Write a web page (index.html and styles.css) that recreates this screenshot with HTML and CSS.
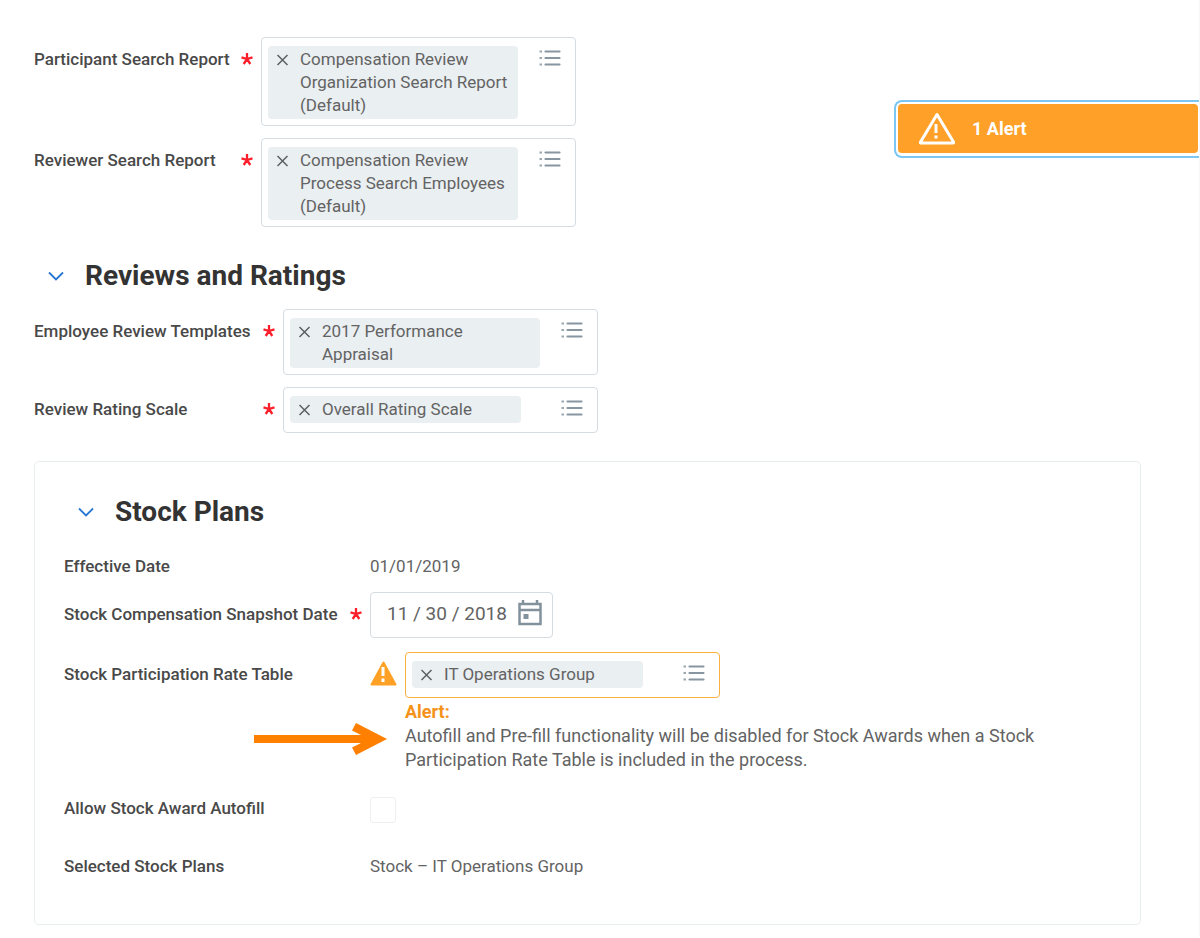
FILE: index.html
```html
<!DOCTYPE html>
<html lang="en">
<head>
    <meta charset="UTF-8">
    <meta name="viewport" content="width=device-width, initial-scale=1.0">
    <title>Compensation Review</title>
    <link rel="stylesheet" href="styles.css">
</head>
<body>
    <!-- shared icons -->
    <svg class="sprite" aria-hidden="true">
        <symbol id="icon-x" viewBox="0 0 12 12">
            <path d="M0.500 1l10 10M10.500 1L0.500 11" fill="none" stroke="#5a5e61" stroke-width="1.5"/>
        </symbol>
        <symbol id="icon-list" viewBox="0 0 22 18">
            <path d="M0.500 1.500h2.500M0.500 8h2.500M0.500 14.500h2.500" stroke="#9aa7af" stroke-width="2.200"/>
            <path d="M6.500 1.500h14M6.500 8h14M6.500 14.500h14" stroke="#8796a0" stroke-width="2.200" stroke-linecap="round"/>
        </symbol>
        <symbol id="icon-chevron" viewBox="0 0 16 10">
            <path d="M1 1.500l7 7 7-7" fill="none" stroke="#2676d2" stroke-width="1.800"/>
        </symbol>
        <symbol id="icon-star" viewBox="0 0 12 12">
            <path d="M6 6V0M6 6L0.500 4.300M6 6L11.500 4.300M6 6L2.700 11M6 6L9.300 11" fill="none" stroke="#fb1f2b" stroke-width="2.300"/>
        </symbol>
    </svg>

    <main class="page">
        <div class="top">
            <div class="fields fields-search">
                <div class="row">
                    <div class="name">
                        <label for="participant">Participant Search Report</label>
                        <svg class="star"><use href="#icon-star"/></svg>
                    </div>
                    <div class="prompt">
                        <div class="pill">
                            <button type="button" class="remove" aria-label="Remove"><svg><use href="#icon-x"/></svg></button>
                            <span>Compensation Review Organization Search Report (Default)</span>
                        </div>
                        <button type="button" class="list" id="participant"><svg><use href="#icon-list"/></svg></button>
                    </div>
                </div>
                <div class="row">
                    <div class="name">
                        <label for="reviewer">Reviewer Search Report</label>
                        <svg class="star"><use href="#icon-star"/></svg>
                    </div>
                    <div class="prompt">
                        <div class="pill">
                            <button type="button" class="remove" aria-label="Remove"><svg><use href="#icon-x"/></svg></button>
                            <span>Compensation Review Process Search Employees (Default)</span>
                        </div>
                        <button type="button" class="list" id="reviewer"><svg><use href="#icon-list"/></svg></button>
                    </div>
                </div>
            </div>

            <div class="alert-frame">
                <button type="button" class="alert-bar">
                    <svg viewBox="0 0 38 34">
                        <path d="M19 2.500L35.500 30Q36 31 35 31H3Q2 31 2.500 30Z" fill="none" stroke="#fff" stroke-width="3" stroke-linejoin="round"/>
                        <path d="M18 12v9M18 23.500v3" stroke="#fff" stroke-width="3"/>
                    </svg>
                    <span>1 Alert</span>
                </button>
            </div>
        </div>

        <section class="ratings">
            <h2><button type="button" class="toggle" aria-label="Collapse"><svg><use href="#icon-chevron"/></svg></button>Reviews and Ratings</h2>
            <div class="fields fields-ratings">
                <div class="row">
                    <div class="name">
                        <label for="templates">Employee Review Templates</label>
                        <svg class="star"><use href="#icon-star"/></svg>
                    </div>
                    <div class="prompt">
                        <div class="pill">
                            <button type="button" class="remove" aria-label="Remove"><svg><use href="#icon-x"/></svg></button>
                            <span>2017 Performance Appraisal</span>
                        </div>
                        <button type="button" class="list" id="templates"><svg><use href="#icon-list"/></svg></button>
                    </div>
                </div>
                <div class="row">
                    <div class="name">
                        <label for="scale">Review Rating Scale</label>
                        <svg class="star"><use href="#icon-star"/></svg>
                    </div>
                    <div class="prompt">
                        <div class="pill pill-short">
                            <button type="button" class="remove" aria-label="Remove"><svg><use href="#icon-x"/></svg></button>
                            <span>Overall Rating Scale</span>
                        </div>
                        <button type="button" class="list" id="scale"><svg><use href="#icon-list"/></svg></button>
                    </div>
                </div>
            </div>
        </section>

        <section class="panel">
            <h2><button type="button" class="toggle" aria-label="Collapse"><svg><use href="#icon-chevron"/></svg></button>Stock Plans</h2>
            <div class="fields fields-stock">
                <div class="row">
                    <div class="name"><span>Effective Date</span></div>
                    <div class="value">01/01/2019</div>
                </div>
                <div class="row">
                    <div class="name">
                        <label for="snapshot">Stock Compensation Snapshot Date</label>
                        <svg class="star"><use href="#icon-star"/></svg>
                    </div>
                    <div class="date-box">
                        <input type="text" id="snapshot" value="11 / 30 / 2018">
                        <button type="button" class="calendar" aria-label="Calendar">
                            <svg viewBox="0 0 24 26">
                                <path d="M1.500 4h21v20h-21z" fill="none" stroke="#82929c" stroke-width="2.500"/>
                                <path d="M1 10h22M5 0v4M19 0v4" stroke="#82929c" stroke-width="2.500"/>
                                <path d="M5.500 14h5v5h-5z" fill="#82929c"/>
                            </svg>
                        </button>
                    </div>
                </div>
                <div class="row row-alert">
                    <div class="name"><label for="rate-table">Stock Participation Rate Table</label></div>
                    <div class="warned">
                        <svg class="warning" viewBox="0 0 27 25">
                            <path d="M13.500 1.500L25.500 23.500H1.500Z" fill="#ffa126" stroke="#ffa126" stroke-width="2" stroke-linejoin="round"/>
                            <path d="M13 6v9M13 17.500v3.500" stroke="#fff" stroke-width="3"/>
                        </svg>
                        <div class="warned-body">
                            <div class="prompt prompt-warning">
                                <div class="pill pill-short">
                                    <button type="button" class="remove" aria-label="Remove"><svg><use href="#icon-x"/></svg></button>
                                    <span>IT Operations Group</span>
                                </div>
                                <button type="button" class="list" id="rate-table"><svg><use href="#icon-list"/></svg></button>
                            </div>
                            <p class="message"><strong>Alert:</strong>Autofill and Pre-fill functionality will be disabled for Stock Awards when a Stock Participation Rate Table is included in the process.</p>
                        </div>
                    </div>
                    <svg class="arrow" viewBox="0 0 134 32">
                        <path d="M0 12h107l-9-4.500 4-7.500 31 16-31 16-4-7.500 9-4.500H0z" fill="#ff8000"/>
                    </svg>
                </div>
                <div class="row row-check">
                    <div class="name"><label for="autofill">Allow Stock Award Autofill</label></div>
                    <input type="checkbox" id="autofill">
                </div>
                <div class="row">
                    <div class="name"><span>Selected Stock Plans</span></div>
                    <div class="value">Stock – IT Operations Group</div>
                </div>
            </div>
        </section>
    </main>
</body>
</html>
```
FILE: styles.css
```css
* {
    box-sizing: border-box;
}
body {
    margin: 0;
    background: #fff;
    color: #636363;
    font-family: Roboto, "Liberation Sans", sans-serif;
    font-size: 17px;
    line-height: 23px;
}
button {
    padding: 0;
    border: 0;
    background: none;
    font: inherit;
    cursor: pointer;
}
svg {
    display: block;
    flex: none;
}
.sprite {
    position: absolute;
    width: 0;
    height: 0;
}
.page {
    padding: 37px 0 12px 34px;
    border-right: 1px solid #f7f7f7;
}

/* alert banner */
.top {
    display: flex;
    justify-content: space-between;
}
.alert-frame {
    width: 305px;
    height: 58px;
    margin-top: 63px;
    padding: 2px 1px 3px 2px;
    border: 2px solid #7cc6f2;
    border-right: 0;
    border-radius: 8px 0 0 8px;
}
.alert-bar {
    display: flex;
    align-items: center;
    gap: 16px;
    width: 100%;
    height: 100%;
    padding-left: 20px;
    border-radius: 4px;
    background: #ffa028;
    color: #fff;
    font-size: 18px;
    font-weight: 700;
}
.alert-bar svg {
    width: 38px;
    height: 34px;
}

/* field rows */
.fields {
    display: flex;
    flex-direction: column;
    gap: 12px;
}
.row {
    display: flex;
    align-items: flex-start;
}
.name {
    display: flex;
    flex: none;
    justify-content: space-between;
    padding: 11px 8px 0 0;
    color: #494949;
    font-weight: 500;
}
.fields-search .name {
    width: 227px;
}
.fields-ratings .name {
    width: 249px;
}
.fields-stock .name {
    width: 306px;
}
.star {
    width: 12px;
    height: 12px;
    margin-top: 5px;
}
.value {
    padding-top: 11px;
}

.prompt {
    display: flex;
    align-items: flex-start;
    justify-content: space-between;
    width: 315px;
    min-height: 46px;
    padding: 8px 14px 6px 6px;
    border: 1px solid #d5dde2;
    border-radius: 4px;
}
.prompt-warning {
    border-color: #fbb040;
}
.pill {
    display: flex;
    align-items: flex-start;
    width: 250px;
    padding: 2px 8px 2px 9px;
    border-radius: 4px;
    background: #eaeff2;
}
.pill-short {
    width: 231px;
}
.remove {
    flex: none;
    width: 23px;
    height: 23px;
}
.remove svg {
    width: 12px;
    height: 12px;
}
.list {
    padding-top: 4px;
}
.list svg {
    width: 22px;
    height: 18px;
}

/* section titles */
h2 {
    display: flex;
    align-items: center;
    gap: 21px;
    margin: 0 0 16px;
    padding-left: 14px;
    color: #333;
    font-size: 28px;
    font-weight: 700;
    line-height: 34px;
}
.toggle svg {
    width: 16px;
    height: 10px;
}
.ratings {
    margin-top: 32px;
}

/* stock plans */
.panel {
    margin: 28px 58px 0 0;
    padding: 33px 29px 46px;
    border: 1px solid #e8edf0;
    border-radius: 5px;
}
.panel h2 {
    margin-bottom: 15px;
}
.fields-stock {
    gap: 14px;
}
.date-box {
    display: flex;
    align-items: center;
    width: 183px;
    height: 46px;
    padding: 0 10px 4px 16px;
    border: 1px solid #d5dde2;
    border-radius: 4px;
}
.date-box input {
    flex: 1;
    min-width: 0;
    padding: 0;
    border: 0;
    background: none;
    color: #636363;
    font: inherit;
    font-size: 19px;
}
.calendar svg {
    width: 24px;
    height: 26px;
}
.row-alert {
    position: relative;
}
.warned {
    display: flex;
    gap: 8px;
}
.warning {
    width: 27px;
    height: 25px;
    margin-top: 9px;
}
.message {
    max-width: 660px;
    margin: 2px 0 0;
    font-size: 18px;
    line-height: 24px;
}
.message strong {
    display: block;
    color: #f5921b;
}
.arrow {
    position: absolute;
    top: 71px;
    left: 190px;
    width: 134px;
    height: 32px;
}
.row-check {
    min-height: 44px;
}
.row-check input {
    appearance: none;
    width: 26px;
    height: 26px;
    margin: 11px 0 0;
    border: 1px solid #efefef;
    border-radius: 3px;
}
```
